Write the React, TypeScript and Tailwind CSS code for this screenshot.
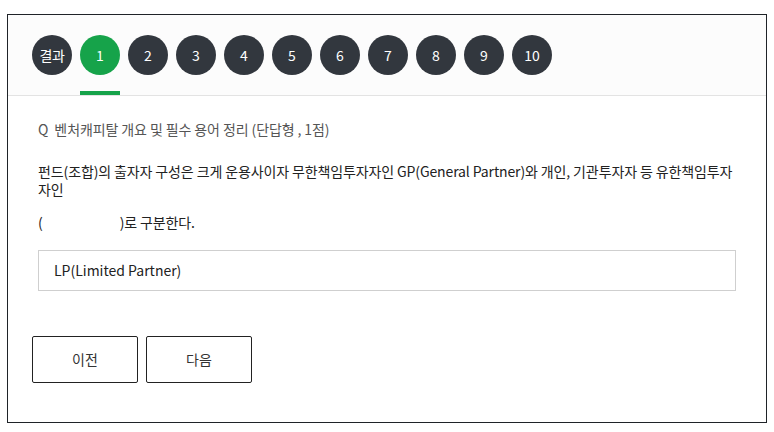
const steps = ["결과", "1", "2", "3", "4", "5", "6", "7", "8", "9", "10"];

export default function App() {
  return (
    <div className="min-h-[432px] bg-white pt-[14px] pl-[7px] font-['Noto_Sans_CJK_KR','Noto_Sans',sans-serif]">
      <div className="w-[760px] h-[409px] border border-[#1f2328] bg-white">
        <div className="flex gap-2 border-b border-[#e3e3e3] bg-[#fcfcfc] px-6 pt-5">
          {steps.map((s, i) => {
            const active = i === 1;
            return (
              <div
                key={s}
                className={`pb-4 ${active ? "border-b-4 border-[#16a34a]" : "border-b-4 border-transparent"}`}
              >
                <div
                  className={`flex h-10 w-10 items-center justify-center rounded-full text-[14px] text-white ${
                    active ? "bg-[#16a34a]" : "bg-[#32373e]"
                  } ${s === "결과" ? "tracking-[-0.5px]" : ""}`}
                >
                  {s}
                </div>
              </div>
            );
          })}
        </div>

        <div className="px-[30px] pt-[23px]">
          <p className="text-[14px] leading-5 tracking-[-0.1px] text-[#555]">Q&nbsp; 벤처캐피탈 개요 및 필수 용어 정리 (단답형 , 1점)</p>
          <p className="mt-[23px] w-[700px] text-[14px] leading-[18px] tracking-[-0.12px] text-[#222]">
            펀드(조합)의 출자자 구성은 크게 운용사이자 무한책임투자자인 GP(General Partner)와 개인, 기관투자자 등 유한책임투자자인
          </p>
          <p className="mt-[15px] text-[14px] leading-[18px] tracking-[-0.12px] text-[#222]">
            (<span className="inline-block w-[77px]" />)로 구분한다.
          </p>
          <div className="mt-[19px] flex h-[41px] w-[698px] items-center border border-[#cfcfcf] px-[15px] text-[14px] text-[#222]">
            LP(Limited Partner)
          </div>
        </div>

        <div className="mt-[45px] flex gap-2 px-6">
          <button className="h-[47px] w-[106px] rounded-[2px] border border-[#222] bg-white text-[14px] text-[#333]">
            이전
          </button>
          <button className="h-[47px] w-[106px] rounded-[2px] border border-[#222] bg-white text-[14px] text-[#333]">
            다음
          </button>
        </div>
      </div>
    </div>
  );
}
